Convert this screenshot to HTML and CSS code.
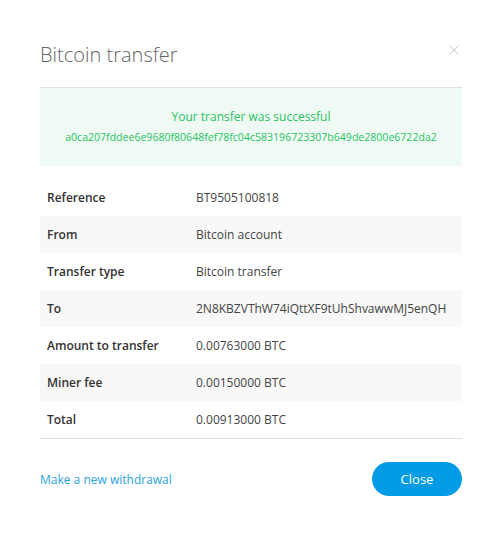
FILE: index.html
```html
<!DOCTYPE html>
<html lang="en">
    <head>
        <meta charset="UTF-8">
        <title>Bitcoin transfer</title>
        <link rel="stylesheet" href="styles.css">
    </head>
    <body>
        <div class="modal">
            <div class="modal-header">
                <h1>Bitcoin transfer</h1>
                <svg class="close-x" width="10" height="10" viewBox="0 0 10 10">
                    <path d="M0.5 0.5L9.5 9.5M9.5 0.5L0.5 9.5" stroke="#c8c8c8" stroke-width="1" fill="none"/>
                </svg>
            </div>
            <div class="success">
                <p class="success-title">Your transfer was successful</p>
                <p class="success-hash">a0ca207fddee6e9680f80648fef78fc04c583196723307b649de2800e6722da2</p>
            </div>
            <table class="details">
                <tr><th>Reference</th><td>BT9505100818</td></tr>
                <tr><th>From</th><td>Bitcoin account</td></tr>
                <tr><th>Transfer type</th><td>Bitcoin transfer</td></tr>
                <tr><th>To</th><td>2N8KBZVThW74iQttXF9tUhShvawwMJ5enQH</td></tr>
                <tr><th>Amount to transfer</th><td>0.00763000 BTC</td></tr>
                <tr><th>Miner fee</th><td>0.00150000 BTC</td></tr>
                <tr><th>Total</th><td>0.00913000 BTC</td></tr>
            </table>
            <div class="modal-footer">
                <a href="#" class="link">Make a new withdrawal</a>
                <button class="btn">Close</button>
            </div>
        </div>
    </body>
</html>
```
FILE: styles.css
```css
body {
    margin: 0;
    background-color: white;
    color: #333;
    font-family: "Open Sans", sans-serif;
}

.modal {
    padding: 30px 38px 0 40px;
}

.modal-header {
    display: flex;
    justify-content: space-between;
    align-items: flex-start;
    height: 57px;
}
h1 {
    margin: 12px 0 0;
    font-size: 20px;
    font-weight: 300;
    color: #666;
    line-height: 26px;
}
.close-x {
    margin-top: 15px;
    margin-right: 3px;
}

.success {
    border-top: 1px solid #e2e2e2;
    background-color: #f0faf5;
    padding: 20px 0 21px;
    text-align: center;
    color: #27c45f;
}
.success p {
    margin: 0;
}
.success-title {
    font-size: 12px;
    line-height: 18px;
}
.success-hash {
    margin-top: 4px !important;
    font-size: 10.55px;
    line-height: 15px;
}

.details {
    width: 100%;
    margin-top: 13px;
    border-collapse: collapse;
    border-bottom: 1px solid #e2e2e2;
    font-size: 12px;
}
.details tr:nth-child(even) {
    background-color: #f8f8f8;
}
.details th, .details td {
    height: 37px;
    padding: 0;
    text-align: left;
    vertical-align: middle;
}
.details th {
    width: 149px;
    padding-left: 7px;
    font-weight: 600;
    color: #333;
}
.details td {
    color: #444;
}

.modal-footer {
    display: flex;
    justify-content: space-between;
    align-items: center;
    margin-top: 23px;
}
.link {
    color: #29a3e0;
    font-size: 12px;
    text-decoration: none;
}
.btn {
    width: 90px;
    height: 34px;
    border: none;
    border-radius: 17px;
    background-color: #039be5;
    color: white;
    font-family: inherit;
    font-size: 13px;
}
```
